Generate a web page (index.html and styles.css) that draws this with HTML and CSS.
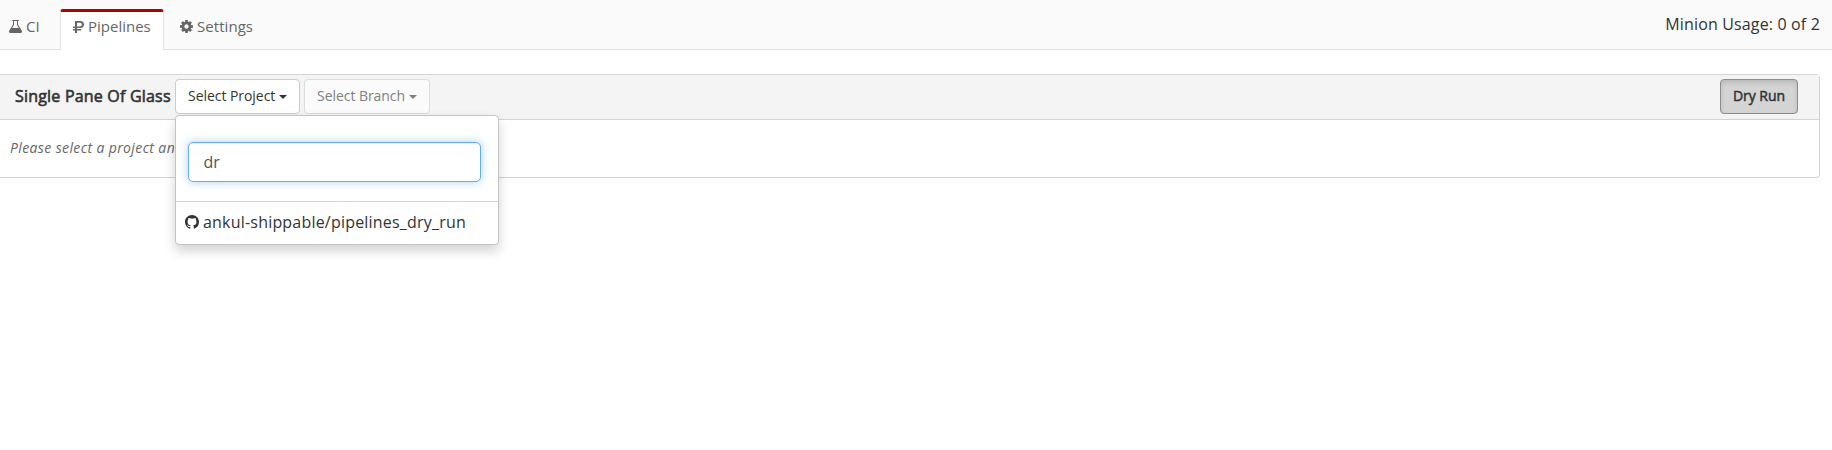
FILE: index.html
```html
<!DOCTYPE html>
<html lang="en">
<head>
<meta charset="utf-8">
<title>Pipelines</title>
<link rel="stylesheet" href="styles.css">
</head>
<body>
<header class="topbar">
  <nav class="tabs">
    <a class="tab tab-ci"><svg class="icon flask" viewBox="0 0 13 13"><path fill-rule="evenodd" d="M3.6 0h5.8q.5 0 .5.5t-.5.5H9v3.6l3.7 6q.5.9.2 1.600T11.700 13H1.300Q.4 13 .1 12.200t.2-1.600l3.700-6V1h-.4q-.5 0-.5-.5t.5-.5zM5 1v3.900L3.100 8h6.800L8 4.900V1z"/></svg><span>CI</span></a>
    <a class="tab tab-pipelines active"><svg class="icon rouble" viewBox="0 0 11 12"><path fill-rule="evenodd" d="M2 0h5.200Q11 .2 11 3.500T7.200 7.100H4v1h4.200v1.500H4V12H2V9.600H0V8.100h2v-1H0V5.400h2zM4 1.700v3.700h3q1.900-.1 1.900-1.900T7 1.700z"/></svg><span>Pipelines</span></a>
    <a class="tab tab-settings"><svg class="icon cog" viewBox="128 128 1536 1536"><path d="M1152 896q0-106-75-181t-181-75-181 75-75 181 75 181 181 75 181-75 75-181zm512-109v222q0 12-8 23t-20 13l-185 28q-19 54-39 91 35 50 107 138 10 12 10 25t-9 23q-27 37-99 108t-94 71q-12 0-26-9l-138-108q-44 23-91 38-16 136-29 186-7 28-36 28h-222q-14 0-24.500-8.500t-11.500-21.500l-28-184q-49-16-90-37l-141 107q-10 9-25 9-14 0-25-11-126-114-165-168-7-10-7-23 0-12 8-23 15-21 51-66.500t54-70.500q-27-50-41-99l-183-27q-13-2-21-12.500t-8-23.500v-222q0-12 8-23t19-13l186-28q14-46 39-92-40-57-107-138-10-12-10-24 0-10 9-23 26-36 98.500-107.500t94.500-71.500q13 0 26 10l138 107q44-23 91-38 16-136 29-186 7-28 36-28h222q14 0 24.500 8.500t11.500 21.500l28 184q49 16 90 37l142-107q9-9 24-9 13 0 25 10 129 119 165 170 7 8 7 22 0 12-8 23-15 21-51 66.500t-54 70.500q26 50 41 98l183 28q13 2 21 12.500t8 23.500z"/></svg><span>Settings</span></a>
  </nav>
  <div class="usage">Minion Usage: 0 of 2</div>
</header>
<main class="panel">
  <div class="panel-head">
    <h1 class="title">Single Pane Of Glass</h1>
    <div class="dropdown">
      <button class="btn btn-project"><span>Select Project</span><i class="caret"></i></button>
      <div class="menu">
        <div class="search"><input class="search-input" type="text" value="dr"></div>
        <a class="result"><svg class="github" viewBox="0 0 16 16"><path d="M8 0C3.580 0 0 3.580 0 8c0 3.540 2.290 6.530 5.470 7.590.4.070.55-.17.55-.38 0-.19-.01-.82-.01-1.490-2.010.37-2.530-.49-2.690-.94-.09-.23-.48-.94-.82-1.130-.28-.15-.68-.52-.01-.53.63-.01 1.080.58 1.230.82.72 1.210 1.870.87 2.330.66.07-.52.28-.87.51-1.070-1.780-.2-3.640-.89-3.640-3.950 0-.87.31-1.590.82-2.150-.08-.2-.36-1.020.08-2.120 0 0 .67-.21 2.200.82.64-.18 1.320-.27 2-.27.68 0 1.360.09 2 .27 1.530-1.040 2.200-.82 2.200-.82.44 1.100.16 1.920.08 2.120.51.56.82 1.270.82 2.150 0 3.070-1.870 3.750-3.650 3.950.29.25.54.73.54 1.480 0 1.070-.01 1.930-.01 2.200 0 .21.15.46.55.38A8.013 8.013 0 0016 8c0-4.420-3.580-8-8-8z"/></svg><span>ankul-shippable/pipelines_dry_run</span></a>
      </div>
    </div>
    <button class="btn btn-branch"><span>Select Branch</span><i class="caret"></i></button>
    <button class="btn btn-run">Dry Run</button>
  </div>
  <p class="hint">Please select a project and</p>
</main>
</body>
</html>
```
FILE: styles.css
```css
* { box-sizing: border-box; }
body {
  margin: 0;
  height: 450px;
  overflow: hidden;
  background: #fff;
  color: #333;
  font-family: "Open Sans", sans-serif;
}
.topbar {
  display: flex;
  justify-content: space-between;
  height: 50px;
  padding-right: 12px;
  background: #fafafa;
  border-bottom: 1px solid #e1e1e1;
}
.tabs { display: flex; padding-top: 9px; }
.tab {
  display: flex;
  align-items: center;
  height: 41px;
  padding-bottom: 8px;
  color: #666;
  font-size: 15px;
  white-space: nowrap;
}
.icon { flex: none; margin-top: 2px; fill: #666; }
.tab-ci { width: 60px; padding-left: 9px; gap: 4px; }
.tab-pipelines { width: 104px; padding-left: 12px; gap: 4px; }
.tab-settings { padding-left: 16px; gap: 4px; letter-spacing: .05px; }
.tab.active {
  background: #fff;
  border: 1px solid #e1e1e1;
  border-top: 3px solid #b50000;
  border-bottom: 0;
  border-radius: 3px 3px 0 0;
  padding-bottom: 11px;
}
.flask { width: 13px; height: 13px; }
.rouble { width: 11px; height: 12px; }
.cog { width: 13px; height: 13px; }
.usage { font-size: 16px; line-height: 48px; letter-spacing: .15px; }
.panel {
  height: 104px;
  margin: 24px 12px 0 0;
  border: 1px solid #d4d4d4;
  border-left: 0;
  border-radius: 0 4px 4px 0;
}
.panel-head {
  display: flex;
  align-items: flex-start;
  height: 45px;
  padding: 4px 21px 0 15px;
  background: #f4f4f4;
  border-bottom: 1px solid #d4d4d4;
}
.title {
  width: 160px;
  margin: 0;
  font-size: 16px;
  font-weight: 400;
  letter-spacing: .2px;
  line-height: 34px;
  white-space: nowrap;
  -webkit-text-stroke: .6px #333;
}
.dropdown { position: relative; }
.btn {
  display: flex;
  align-items: center;
  height: 35px;
  padding: 0 0 2px 12px;
  border: 1px solid #ccc;
  border-radius: 4px;
  background: #fff;
  color: #333;
  font: 14px "Open Sans", sans-serif;
  letter-spacing: -.05px;
  white-space: nowrap;
}
.caret {
  margin: 2px 0 0 4px;
  border: 4px solid transparent;
  border-top-color: currentColor;
  border-bottom: 0;
}
.btn-project { width: 125px; }
.btn-branch { width: 126px; margin-left: 4px; background: #fbfbfb; border-color: #dcdcdc; color: #808080; }
.btn-run {
  width: 78px;
  margin-left: auto;
  padding-left: 12px;
  background: #d4d4d4;
  border-color: #8c8c8c;
  box-shadow: inset 0 3px 5px rgba(0, 0, 0, .125);
  -webkit-text-stroke: .5px #333;
}
.menu {
  position: absolute;
  top: 36px;
  left: 0;
  z-index: 2;
  width: 324px;
  height: 130px;
  border: 1px solid #c4c4c4;
  border-radius: 4px;
  background: #fff;
  box-shadow: 0 6px 12px rgba(0, 0, 0, .175);
}
.search {
  height: 86px;
  padding: 26px 16px 0 12px;
  border: 0 solid #d4d4d4;
  border-bottom-width: 1px;
}
.search-input {
  display: block;
  width: 293px;
  height: 40px;
  padding: 0 14.5px 1px;
  border: 1px solid #66afe9;
  border-radius: 5px;
  outline: 0;
  box-shadow: inset 0 1px 1px rgba(0, 0, 0, .075), 0 0 8px rgba(102, 175, 233, .6);
  color: #555;
  font: 16px "Open Sans", sans-serif;
}
.result {
  display: flex;
  align-items: center;
  height: 40px;
  padding: 0 0 1px 9px;
  gap: 4px;
  font-size: 16px;
  letter-spacing: .2px;
  white-space: nowrap;
}
.github { width: 14px; height: 14px; fill: #333; }
.hint {
  margin: 0;
  padding-left: 10px;
  color: #666;
  font-size: 14px;
  font-style: italic;
  letter-spacing: .38px;
  line-height: 55px;
}
```
